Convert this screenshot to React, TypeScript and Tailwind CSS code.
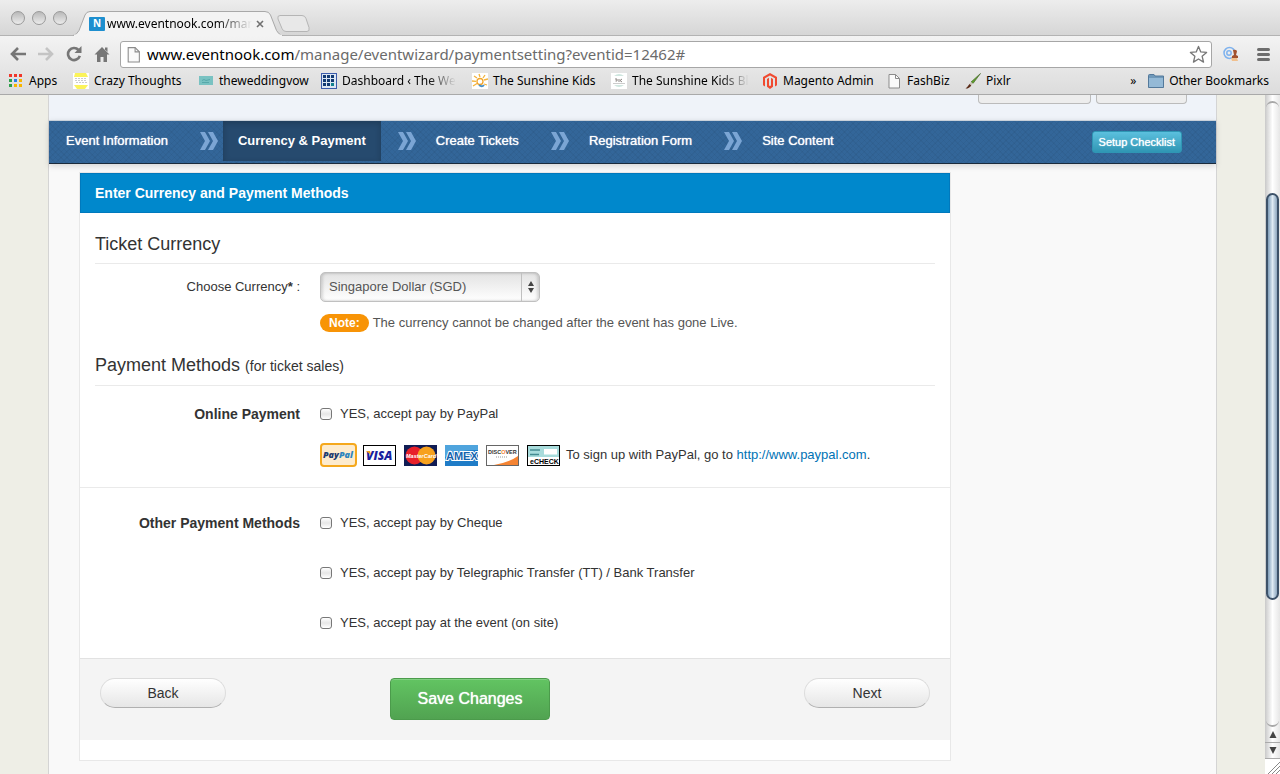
import { Fragment, type ReactNode } from "react";

const bookmarks = [
  { name: "Apps", icon: <AppsIcon />, width: "w-[65px]" },
  { name: "Crazy Thoughts", icon: <CrazyIcon />, width: "w-[125px]" },
  { name: "theweddingvow", icon: <VowIcon />, width: "w-[123px]" },
  { name: "Dashboard ‹ The We", icon: <DashboardIcon />, width: "w-[151px]", fade: true },
  { name: "The Sunshine Kids", icon: <SunIcon />, width: "w-[139px]" },
  { name: "The Sunshine Kids Bl", icon: <KidsIcon />, width: "w-[151px]", fade: true },
  { name: "Magento Admin", icon: <MagentoIcon />, width: "w-[124px]" },
  { name: "FashBiz", icon: <PageIcon className="h-4 w-4" />, width: "w-[79px]" },
  { name: "Pixlr", icon: <BrushIcon />, width: "w-[60px]" },
];

const steps = [
  "Event Information",
  "Currency & Payment",
  "Create Tickets",
  "Registration Form",
  "Site Content",
];

function AppsIcon() {
  const colors = ["#f0372c", "#f0372c", "#f0372c", "#2fa04c", "#2a80ea", "#f8b500", "#2fa04c", "#f8b500", "#f8b500"];
  return (
    <svg viewBox="0 0 16 16" className="h-4 w-4">
      {colors.map((c, i) => (
        <rect key={i} x={1 + (i % 3) * 5} y={1 + Math.floor(i / 3) * 5} width="3" height="3" fill={c} />
      ))}
    </svg>
  );
}

function CrazyIcon() {
  return (
    <svg viewBox="0 0 16 16" className="h-4 w-4">
      <rect width="16" height="16" fill="#fff" />
      <path d="M2 0h11l2 4H1zM1 12h14l-3 4H4z" fill="#fbf35a" />
      <path d="M2 5.500h12M2 7.500h11M3 9.500h11" stroke="#ccc" strokeDasharray="2 1" />
    </svg>
  );
}

function VowIcon() {
  return (
    <svg viewBox="0 0 16 16" className="h-4 w-4">
      <rect x="1" y="3" width="14" height="9" fill="#79c2c2" />
      <path d="M4 7.500l2-1 2 1 4-1M4 9.500h7" stroke="#57a8aa" fill="none" />
    </svg>
  );
}

function DashboardIcon() {
  return (
    <svg viewBox="0 0 16 16" className="h-4 w-4">
      <rect width="16" height="16" fill="#3b5bab" />
      <rect x="1" y="1" width="14" height="14" fill="#dce6f3" />
      {[0, 1, 2, 3, 4, 5, 6, 7, 8].map((i) => (
        <rect
          key={i}
          x={2 + (i % 3) * 4}
          y={2 + Math.floor(i / 3) * 4}
          width="3"
          height="3"
          fill={i === 8 ? "#11828f" : "#123a73"}
        />
      ))}
    </svg>
  );
}

function SunIcon() {
  return (
    <svg viewBox="0 0 16 16" className="h-4 w-4">
      <rect width="16" height="16" fill="#fff" />
      <path
        d="M7 1l1 3M2 3l3 2M0 8l4 .3M1 13l4-2.500M13 2l-2 3M16 6l-4 1M15 12l-3-1"
        stroke="#f3b33a"
        strokeWidth="1.300"
      />
      <circle cx="8" cy="8.500" r="3" fill="#fff" stroke="#f3a52a" strokeWidth="1.300" />
      <path d="M7 12q3 2.500 5 0" stroke="#4a90c8" strokeWidth="2" fill="none" />
    </svg>
  );
}

function KidsIcon() {
  return (
    <svg viewBox="0 0 16 16" className="h-4 w-4">
      <rect width="16" height="16" fill="#fff" />
      <path d="M3 3q5-4 10 0zM3 12h10q-5 4-10 0z" fill="#cfe6df" />
      <path d="M4 6h2v2H4.500M8 6v3M11 6l-2 1.500L11 9" stroke="#8b8582" fill="none" />
      <path d="M2 10.500h12" stroke="#ccc" />
    </svg>
  );
}

function MagentoIcon() {
  return (
    <svg viewBox="0 0 16 16" className="h-4 w-4" fill="#f04a30">
      <path d="M8 0l7 4v8.300l-2 1.200V5.300L8 2.400 3 5.300v8.200l-2-1.200V4z" />
      <path d="M5 6l2-1.200v7.700l1 .6 1-.6V4.800L11 6v7.700L8 16l-3-2.300z" />
    </svg>
  );
}

function PageIcon({ className }: { className: string }) {
  return (
    <svg viewBox="0 0 16 16" className={className}>
      <path d="M3 1.500h6.500l4 4v9.500H3z" fill="#fafafa" stroke="#8b8b8b" />
      <path d="M9.500 1.500v4h4" fill="none" stroke="#8b8b8b" />
    </svg>
  );
}

function BrushIcon() {
  return (
    <svg viewBox="0 0 16 16" className="h-4 w-4">
      <path d="M15.500.5L6 9l2 1.500z" fill="#5fa02b" stroke="#3c5c22" strokeWidth=".6" />
      <path d="M6 9l2 1.500-2 2-2-1.300z" fill="#c9c3b8" />
      <path d="M4.500 11l1.800 1.400Q4.500 15.500.5 15.500q2-1.500 4-4.500z" fill="#5b2c18" />
    </svg>
  );
}

function FolderIcon() {
  return (
    <svg viewBox="0 0 16 16" className="h-4 w-4">
      <path d="M.5 2.500q0-1 1-1H6L7 3h8.500v11.500H.5z" fill="#6f98b9" stroke="#53799b" />
      <path d="M1 5h14v9H1z" fill="#94b9d6" />
    </svg>
  );
}

function StepArrow() {
  return (
    <svg viewBox="0 0 18 18" className="mr-[5px] ml-[17px] h-[18px] w-[18px]" fill="#7ba5d4">
      <path d="M0 0h5l5 9-5 9H0l5-9z" />
      <path d="M8 0h5l5 9-5 9H8l5-9z" />
    </svg>
  );
}

function Bookmark({ name, icon, width, fade }: { name: string; icon: ReactNode; width: string; fade?: boolean }) {
  return (
    <a href="#" className={`${width} flex shrink-0 items-center gap-[5px] whitespace-nowrap`}>
      <span className="shrink-0">{icon}</span>
      <span className={fade ? "[mask-image:linear-gradient(to_right,black_75%,transparent)]" : ""}>{name}</span>
    </a>
  );
}

function BrowserChrome() {
  return (
    <header className="shrink-0 border-b border-[#a9a9a9] bg-[#dedede] font-['Noto_Sans','Open_Sans',sans-serif] text-black">
      <div className="flex h-9 items-end border-b border-[#b3b3b3] bg-linear-to-b from-[#ededed] to-[#d6d6d6]">
        <div className="flex gap-[7px] self-center pl-[11px]">
          {["Close", "Minimise", "Zoom"].map((label) => (
            <button
              key={label}
              aria-label={label}
              className="h-[14px] w-[14px] rounded-full border border-[#999] bg-linear-to-b from-[#b9b9b9] to-[#ececec]"
            />
          ))}
        </div>
        <div className="relative -mb-px ml-[6px] h-[25px] w-[210px]">
          <svg viewBox="0 0 210 25" className="absolute inset-0 h-full w-full">
            <path
              d="M0 24.500q4-1 6-5L12 4q1.500-3.500 5-3.500h175q4 0 5.500 3.500l6 15.500q2 4 6 5V25H0z"
              fill="#f3f3f3"
              stroke="#a8a8a8"
            />
            <path d="M1 24.500h208" stroke="#f3f3f3" strokeWidth="2" />
          </svg>
          <div className="relative flex h-full items-center pl-4 text-xs">
            <span className="mr-[2px] flex h-[14px] w-4 items-center justify-center rounded-[1px] bg-[#1e8fcf] text-[10px] font-bold text-white">
              N
            </span>
            <span className="w-[145px] whitespace-nowrap [mask-image:linear-gradient(to_right,black_75%,transparent)]">
              www.eventnook.com/man
            </span>
            <button aria-label="Close tab" className="ml-1">
              <svg viewBox="0 0 8 8" className="h-2 w-2" stroke="#707070" strokeWidth="1.600">
                <path d="M1 1l6 6M7 1L1 7" />
              </svg>
            </button>
          </div>
        </div>
        <button aria-label="New tab" className="-ml-[6px] mb-[3px]">
          <svg viewBox="0 0 33 17" className="h-[17px] w-[33px]">
            <path
              d="M3 .5h22q3 0 4 3l3 9q1 4-2 4H9q-3 0-4-3L1 4Q0 .5 3 .5z"
              fill="#e8e8e8"
              stroke="#b5b5b5"
            />
          </svg>
        </button>
      </div>

      <div className="bg-linear-to-b from-[#f3f3f3] to-[#dcdcdc]">
        <div className="flex h-[35px] items-center px-[10px] pt-px">
          <button aria-label="Back" className="mr-3">
            <svg viewBox="0 0 16 14" className="h-[14px] w-4" fill="none" stroke="#767676" strokeWidth="2.600">
              <path d="M8 1L2 7l6 6M2 7h14" />
            </svg>
          </button>
          <button aria-label="Forward" className="mr-3">
            <svg viewBox="0 0 16 14" className="h-[14px] w-4" fill="none" stroke="#c4c4c4" strokeWidth="2.600">
              <path d="M8 1l6 6-6 6M14 7H0" />
            </svg>
          </button>
          <button aria-label="Reload" className="mr-3">
            <svg viewBox="0 0 16 16" className="h-4 w-4">
              <path d="M12.500 4A6 6 0 1 0 13.800 9.800" fill="none" stroke="#767676" strokeWidth="2.600" />
              <path d="M15.500 0v7h-7z" fill="#767676" />
            </svg>
          </button>
          <button aria-label="Home" className="mr-[10px]">
            <svg viewBox="0 0 16 16" className="h-4 w-4" fill="#767676">
              <path d="M8 1l7.500 7.500H13V16H9.500v-5h-3v5H3V8.500H.5z" />
              <path d="M11 1.500h2.500V6L11 3.500z" />
            </svg>
          </button>
          <div className="flex h-[27px] min-w-0 flex-1 items-center rounded-[3px] border border-[#a6a6a6] bg-white pr-[3px] pl-[4px]">
            <PageIcon className="h-[17px] w-[17px] shrink-0" />
            {/* host part stays black, the path is greyed */}
            <p className="ml-[5px] flex-1 text-[15px] whitespace-nowrap text-[#6b6b6b]">
              <span className="text-black">www.eventnook.com</span>
              /manage/eventwizard/paymentsetting?eventid=12462#
            </p>
            <button aria-label="Bookmark this page">
              <svg viewBox="0 0 20 20" className="h-[19px] w-[19px]" fill="#fff" stroke="#777" strokeWidth="1.400">
                <path
                  d="M10 1.500l2.400 5.800 6.100.5-4.700 4 1.500 6.200-5.300-3.300L4.700 18l1.500-6.200-4.700-4 6.100-.5z"
                  strokeLinejoin="round"
                />
              </svg>
            </button>
          </div>
          <button aria-label="Extension" className="ml-[11px]">
            <svg viewBox="0 0 17 16" className="h-4 w-[17px]">
              <g fill="none" stroke="#7eb2ee" strokeWidth="1.500">
                <circle cx="6.500" cy="7" r="5.500" />
                <circle cx="6" cy="7" r="2.200" />
              </g>
              <path d="M8 12h6l1 3H9z" fill="#f1c08e" />
              <path d="M10 4q4-1 4 1.500L13 9l2 1v2H9v-2l2-1z" fill="#a3512d" />
            </svg>
          </button>
          <button aria-label="Menu" className="ml-[17px]">
            <svg viewBox="0 0 13 13" className="h-[13px] w-[13px]" stroke="#6d6d6d" strokeWidth="3" strokeLinecap="round">
              <path d="M1.500 1.500h10M1.500 6.500h10M1.500 11.500h10" />
            </svg>
          </button>
        </div>
        <nav className="flex h-[23px] items-start pt-[2px] pr-[11px] pl-2 text-xs leading-4">
          <div className="flex min-w-0 flex-1">
            {bookmarks.map((b) => (
              <Bookmark key={b.name} {...b} />
            ))}
          </div>
          <button aria-label="More bookmarks" className="mr-3">
            »
          </button>
          <a href="#" className="flex items-center gap-[5px] whitespace-nowrap">
            <FolderIcon />
            Other Bookmarks
          </a>
        </nav>
      </div>
    </header>
  );
}

function Scrollbar() {
  return (
    <div aria-hidden="true" className="flex w-[15px] shrink-0 flex-col bg-linear-to-r from-[#c9c9c9] via-white to-[#e6e6e6]">
      <div className="mx-px mt-[6px] h-[92px] rounded-t-full border-t-2 border-[#a8a8a8]" />
      <div className="mx-px h-[407px] rounded-full border-2 border-[#3d5269] bg-linear-to-r from-[#7f9db9] via-[#dfebf4] to-[#8fa7bf]" />
      <div className="mx-px flex-1 rounded-b-full border-b-2 border-[#a8a8a8]" />
      <div className="flex h-4 items-center justify-center border-b border-[#aaa]">
        <svg viewBox="0 0 8 7" className="h-[7px] w-2" fill="#444">
          <path d="M4 0l3.500 7h-7z" />
        </svg>
      </div>
      <div className="flex h-4 items-center justify-center border-b border-[#aaa]">
        <svg viewBox="0 0 8 7" className="h-[7px] w-2" fill="#444">
          <path d="M4 7L.5 0h7z" />
        </svg>
      </div>
      <svg viewBox="0 0 15 15" className="h-[15px] w-[15px] bg-white" stroke="#888">
        <path d="M3 15L15 3M7 15l8-8M11 15l4-4" />
      </svg>
    </div>
  );
}

function CardLogos() {
  return (
    <div className="flex shrink-0 items-center gap-2">
      <svg viewBox="0 0 37 24" className="-mr-[2px] h-6 w-[37px]" role="img" aria-label="PayPal">
        <rect x="1" y="1" width="35" height="22" rx="3" fill="#fdebcd" stroke="#f5a81c" strokeWidth="2" />
        <text x="3" y="15" fill="#1d3b6f" fontFamily="Open Sans, sans-serif" fontSize="9" fontWeight="800" fontStyle="italic">
          Pay<tspan fill="#2f85bd">Pal</tspan>
        </text>
      </svg>
      <svg viewBox="0 0 33 21" className="h-[21px] w-[33px]" role="img" aria-label="Visa">
        <rect x=".5" y=".5" width="32" height="20" fill="#fff" stroke="#000" />
        <text x="3" y="15" fill="#1a1f9f" fontFamily="Open Sans, sans-serif" fontSize="12" fontWeight="800" fontStyle="italic">
          VISA
        </text>
        <path d="M3 6h4l1 4z" fill="#f3a21b" />
      </svg>
      <svg viewBox="0 0 33 21" className="h-[21px] w-[33px]" role="img" aria-label="MasterCard">
        <rect width="33" height="21" fill="#101c54" />
        <circle cx="10.500" cy="10.500" r="9" fill="#e8202a" />
        <circle cx="22.500" cy="10.500" r="9" fill="#f7a11d" />
        <text x="2" y="13" fill="#fff" fontFamily="Liberation Sans, sans-serif" fontSize="5.500" fontWeight="700" fontStyle="italic">
          MasterCard
        </text>
      </svg>
      <svg viewBox="0 0 33 21" className="h-[21px] w-[33px]" role="img" aria-label="American Express">
        <rect width="33" height="21" fill="#1f7cc7" />
        <path d="M0 0h33v5Q15 4 0 12z" fill="#4fa4dd" />
        <text x="1" y="15" fill="#1463ad" stroke="#fff" strokeWidth="2" paintOrder="stroke" fontFamily="Liberation Sans, sans-serif" fontSize="11" fontWeight="700">
          AMEX
        </text>
      </svg>
      <svg viewBox="0 0 33 21" className="h-[21px] w-[33px]" role="img" aria-label="Discover">
        <rect x=".5" y=".5" width="32" height="20" fill="#fff" stroke="#666" />
        <path d="M8 20Q24 17 32 11v9z" fill="#f58433" />
        <text x="2" y="9" fill="#333" fontFamily="Liberation Sans, sans-serif" fontSize="5.500" fontWeight="700">
          DISC<tspan fill="#f58433">O</tspan>VER
        </text>
        <path d="M10 12h12" stroke="#999" strokeDasharray="1 1" />
      </svg>
      <svg viewBox="0 0 33 21" className="h-[21px] w-[33px]" role="img" aria-label="eCheck">
        <rect x=".5" y=".5" width="32" height="20" fill="#fff" stroke="#000" />
        <rect x="1" y="1" width="31" height="11" fill="#a8dcdc" />
        <path d="M3 5h10M3 9.500h9" stroke="#458b90" strokeWidth="1.500" />
        <path d="M17 5.500h13M17 8h13" stroke="#fff" strokeWidth="3" />
        <text x="3" y="19" fill="#000" fontFamily="Liberation Sans, sans-serif" fontSize="7" fontWeight="700">
          eCHECK
        </text>
      </svg>
    </div>
  );
}

function PaymentOption({ id, label }: { id: string; label: string }) {
  return (
    <div className="flex h-5 items-center">
      <input
        type="checkbox"
        id={id}
        className="mr-2 h-3 w-3 appearance-none rounded-[3px] border border-[#777] bg-linear-to-b from-white via-[#e6e6e6] to-white checked:bg-[#555]"
      />
      <label htmlFor={id}>{label}</label>
    </div>
  );
}

function Row({ label, children }: { label: ReactNode; children: ReactNode }) {
  return (
    <div className="flex gap-5">
      <div className="w-[205px] shrink-0 text-right">{label}</div>
      <div className="min-w-0 flex-1">{children}</div>
    </div>
  );
}

function StepBar() {
  return (
    <nav className="flex h-11 items-start border-t border-b border-t-[#c9d1da] border-b-[#1b2b3c] bg-[#336699] bg-[repeating-linear-gradient(45deg,#0000000a_0_1px,transparent_1px_4px),repeating-linear-gradient(-45deg,#0000000a_0_1px,transparent_1px_4px)] text-[13px] text-white shadow-[0_2px_6px_#00000026]">
      <div className="flex flex-1 items-center pl-[2px]">
        {steps.map((step, i) => (
          <Fragment key={step}>
            {i > 0 && <StepArrow />}
            <a
              href="#"
              className={
                i === 1
                  ? "h-10 bg-[#264a6e] px-[15px] leading-10 font-bold shadow-[inset_0_2px_6px_#00000033]"
                  : "h-10 px-[15px] leading-10 [text-shadow:0_0_1px_#fff]"
              }
            >
              {step}
            </a>
          </Fragment>
        ))}
      </div>
      <button className="mt-[10px] mr-[34px] h-[22px] rounded-[3px] border border-[#2f96b4] bg-linear-to-b from-[#5bc0de] to-[#2f96b4] px-[6px] text-[11px] text-white [text-shadow:0_0_1px_#fff]">
        Setup Checklist
      </button>
    </nav>
  );
}

function PaymentForm() {
  return (
    <form
      onSubmit={(e) => e.preventDefault()}
      className="mt-2 ml-[30px] max-w-[872px] border border-[#e8e8e8] bg-white pb-5"
    >
      <h1 className="h-10 border border-[#0079bd] bg-[#0088cc] px-[14px] text-sm leading-[38px] font-bold text-white">
        Enter Currency and Payment Methods
      </h1>

      <section className="px-[15px] pt-5">
        <h2 className="border-b border-[#eaeaea] pt-px pb-[9px] text-lg leading-5">Ticket Currency</h2>
        <div className="pt-2">
          <Row
            label={
              <label htmlFor="currency" className="block leading-[30px]">
                Choose Currency<b>*</b> :
              </label>
            }
          >
            <div className="relative w-[220px]">
              <select
                id="currency"
                className="h-[30px] w-full appearance-none rounded-[5px] border border-[#c0c0c0] bg-linear-to-b from-[#e3e3e3] to-white px-2 text-[#555] shadow-[inset_2px_0_3px_#00000022,inset_-2px_0_3px_#00000022]"
              >
                <option>Singapore Dollar (SGD)</option>
              </select>
              <span className="pointer-events-none absolute inset-y-px right-0 flex w-[19px] items-center justify-center border-l border-[#c0c0c0]">
                <svg viewBox="0 0 6 12" className="h-3 w-[6px]" fill="#444">
                  <path d="M3 0l3 5H0zM3 12L0 7h6z" />
                </svg>
              </span>
            </div>
            <p className="mt-[11px] flex h-5 items-center text-[#555]">
              <span className="mr-1 rounded-full bg-[#f89406] px-[9px] text-xs leading-[18px] font-bold text-white">
                Note:
              </span>
              The currency cannot be changed after the event has gone Live.
            </p>
          </Row>
        </div>

        <h2 className="mt-[22px] border-b border-[#eaeaea] pb-[9px] text-lg leading-5">
          Payment Methods <span className="text-sm">(for ticket sales)</span>
        </h2>
      </section>

      <section className="border-b border-[#eaeaea] px-[15px] pt-[18px] pb-5">
        <Row label={<b className="text-sm leading-5">Online Payment</b>}>
          <PaymentOption id="paypal" label="YES, accept pay by PayPal" />
          <div className="mt-[19px] flex items-center gap-[6px]">
            <CardLogos />
            <p>
              To sign up with PayPal, go to{" "}
              <a href="#" className="text-[#0072b5]">
                http://www.paypal.com
              </a>
              .
            </p>
          </div>
        </Row>
      </section>

      <section className="py-[25px] px-[15px]">
        <Row label={<b className="text-sm leading-5">Other Payment Methods</b>}>
          <div className="flex flex-col gap-[30px]">
            <PaymentOption id="cheque" label="YES, accept pay by Cheque" />
            <PaymentOption id="transfer" label="YES, accept pay by Telegraphic Transfer (TT) / Bank Transfer" />
            <PaymentOption id="onsite" label="YES, accept pay at the event (on site)" />
          </div>
        </Row>
      </section>

      <div className="flex h-[82px] items-start justify-between border-t border-[#e2e2e2] bg-[#f4f4f4] px-5 pt-[19px] text-sm">
        <button className="h-[30px] w-[126px] rounded-full border border-[#dcdcdc] border-b-[#b0b0b0] bg-linear-to-b from-white to-[#e6e6e6]">
          Back
        </button>
        <button className="mr-[90px] ml-auto h-[42px] w-40 rounded-[4px] border border-[#4b9b4b] bg-linear-to-b from-[#62c462] to-[#51a351] text-base text-white shadow-[inset_0_1px_0_#ffffff33] [text-shadow:0_0_1px_#fff]">
          Save Changes
        </button>
        <button className="ml-[164px] h-[30px] w-[126px] rounded-full border border-[#dcdcdc] border-b-[#b0b0b0] bg-linear-to-b from-white to-[#e6e6e6]">
          Next
        </button>
      </div>
    </form>
  );
}

export default function App() {
  return (
    <div className="flex h-screen flex-col overflow-hidden">
      <BrowserChrome />
      <div className="flex min-h-0 flex-1">
        <div className="min-w-0 flex-1 overflow-hidden bg-[#eeeee6] font-['Liberation_Sans',Arial,sans-serif] text-[13px] text-[#333]">
          <main className="mx-auto min-h-full max-w-[1169px] border-x border-[#d4d4d4] bg-[#f9f9f9]">
            <div className="flex h-[25px] items-start justify-end gap-[5px] bg-[#eff3f9] pr-[29px]">
              <button aria-label="View event" className="h-[9px] w-[113px] rounded-b-[4px] border border-t-0 border-[#bbb] bg-[#ededed]" />
              <button aria-label="Edit details" className="h-[9px] w-[91px] rounded-b-[4px] border border-t-0 border-[#bbb] bg-[#ededed]" />
            </div>
            <StepBar />
            <PaymentForm />
          </main>
        </div>
        <Scrollbar />
      </div>
    </div>
  );
}
